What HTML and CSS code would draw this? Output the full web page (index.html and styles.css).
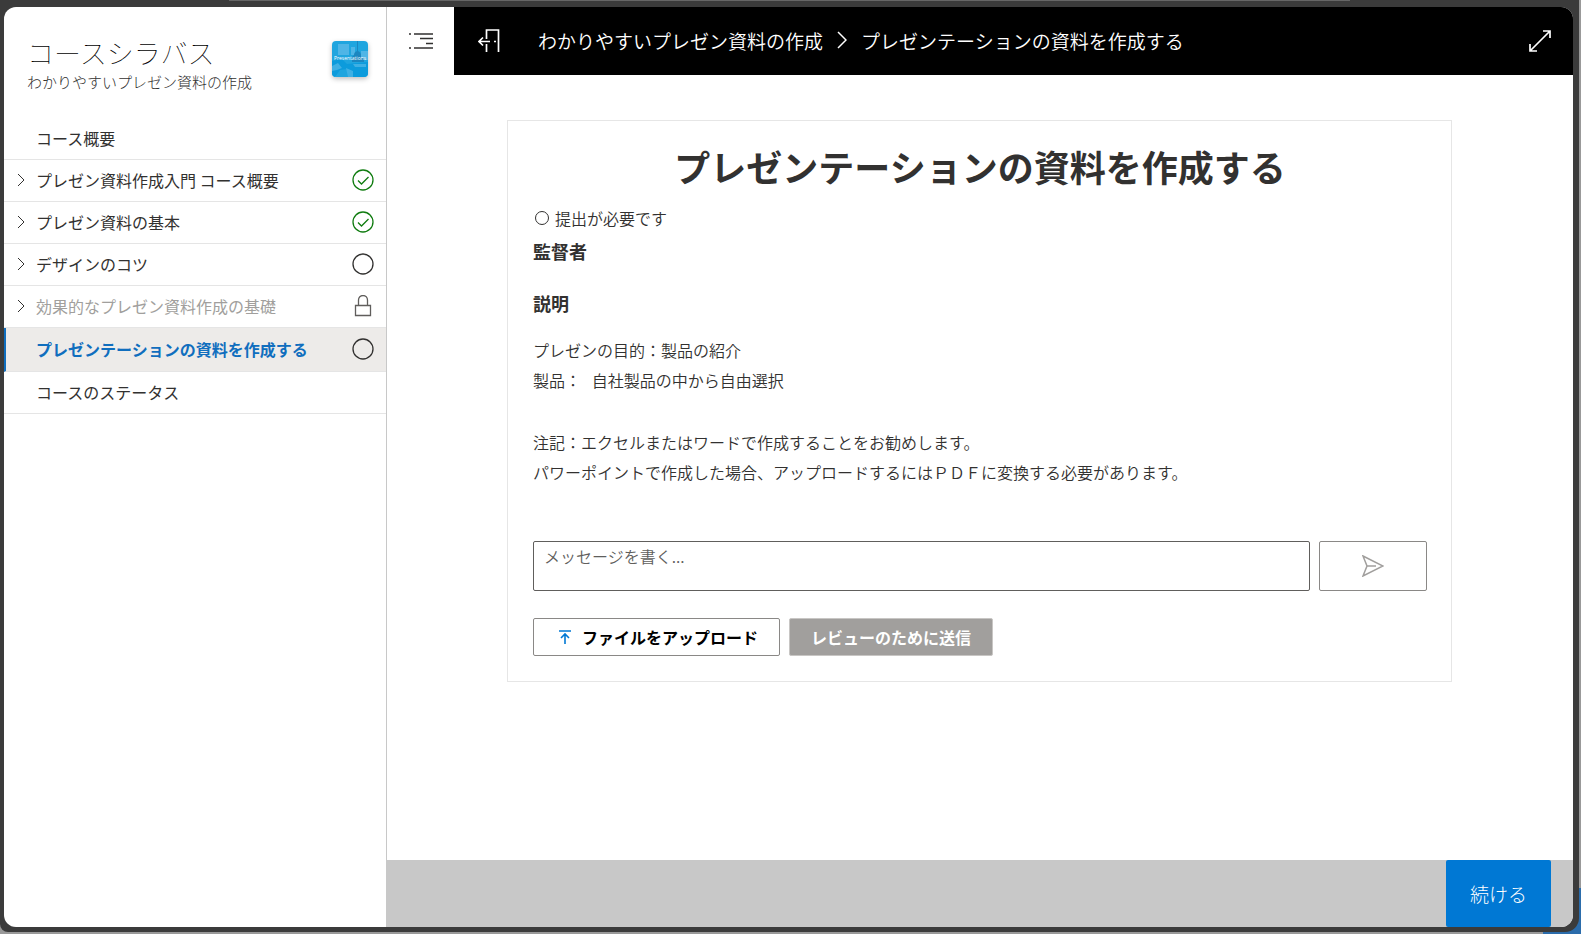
FILE: index.html
```
<!DOCTYPE html>
<html lang="ja">
<head>
    <meta charset="UTF-8">
    <meta name="viewport" content="width=device-width, initial-scale=1.0">
    <title>プレゼンテーションの資料を作成する</title>
    <link rel="stylesheet" href="styles.css">
</head>
<body>

<div class="frame">
<div class="player">
    <aside class="sidebar">
        <header class="course-header">
            <div>
                <h1>コースシラバス</h1>
                <p>わかりやすいプレゼン資料の作成</p>
            </div>
            <div class="course-logo">
                <svg viewBox="0 0 36 36" aria-hidden="true">
                    <rect width="36" height="36" fill="#1fa5df"/>
                    <path d="M6 3h11v11H6zM19 6h4v8h-4zM29 10h7v9h-7z" fill="#4fb5e6"/>
                    <path d="M22 14q0-3 3-4V0h1v10q3 1 3 4v3h3v4H20v-5z" fill="#1c86c0"/>
                    <path d="M0 20l10-2 5 5 21-2v15H17l-2-8-7 1-5 7H0z" fill="#0c9bdc"/>
                    <path d="M0 25l6-3 4 5-5 2-5 1zM14 27l7 3v6h-5zM21 23h13v3H23z" fill="#3fb0e4"/>
                </svg>
                <span>Presentations</span>
            </div>
        </header>
        <nav>
            <ul class="syllabus">
                <li><a href="#">コース概要</a></li>
                <li>
                    <a href="#">
                        <svg class="chevron" viewBox="0 0 8 14"><path d="M1 1l6 6-6 6"/></svg>
                        <span>プレゼン資料作成入門 コース概要</span>
                        <svg class="status done" viewBox="0 0 22 22"><circle cx="11" cy="11" r="10"/><path d="M6 11.500l3.500 3.500 7-7"/></svg>
                    </a>
                </li>
                <li>
                    <a href="#">
                        <svg class="chevron" viewBox="0 0 8 14"><path d="M1 1l6 6-6 6"/></svg>
                        <span>プレゼン資料の基本</span>
                        <svg class="status done" viewBox="0 0 22 22"><circle cx="11" cy="11" r="10"/><path d="M6 11.500l3.500 3.500 7-7"/></svg>
                    </a>
                </li>
                <li>
                    <a href="#">
                        <svg class="chevron" viewBox="0 0 8 14"><path d="M1 1l6 6-6 6"/></svg>
                        <span>デザインのコツ</span>
                        <svg class="status" viewBox="0 0 22 22"><circle cx="11" cy="11" r="10"/></svg>
                    </a>
                </li>
                <li>
                    <a href="#" class="locked">
                        <svg class="chevron" viewBox="0 0 8 14"><path d="M1 1l6 6-6 6"/></svg>
                        <span>効果的なプレゼン資料作成の基礎</span>
                        <svg class="status" viewBox="0 0 22 22"><path d="M3.500 10.500h15v10h-15zM6.500 10.500V5a4.500 4.500 0 0 1 9 0v5.500"/></svg>
                    </a>
                </li>
                <li>
                    <a href="#" class="current">
                        <span>プレゼンテーションの資料を作成する</span>
                        <svg class="status" viewBox="0 0 22 22"><circle cx="11" cy="11" r="10"/></svg>
                    </a>
                </li>
                <li><a href="#">コースのステータス</a></li>
            </ul>
        </nav>
    </aside>

    <div class="main">
        <header class="topbar">
            <button type="button" class="menu-btn" aria-label="目次">
                <svg viewBox="0 0 24 16"><path d="M0 1h2M5 1h19M11 5.500h13M17 10.500h7M0 15h2M5 15h19"/></svg>
            </button>
            <div class="titlebar">
                <button type="button" class="exit-btn" aria-label="終了">
                    <svg viewBox="0 0 22 24"><path d="M8.500 10V1h12v22M8.500 15v8M12 12.500H1M5 8.500l-4 4 4 4M16 12.500h2"/></svg>
                </button>
                <nav class="breadcrumb">
                    <a href="#">わかりやすいプレゼン資料の作成</a>
                    <svg viewBox="0 0 10 18"><path d="M1 1l8 8-8 8"/></svg>
                    <span>プレゼンテーションの資料を作成する</span>
                </nav>
                <button type="button" class="full-btn" aria-label="全画面">
                    <svg viewBox="0 0 22 22"><path d="M1 21L21 1M14 1h7v7M1 14v7h7"/></svg>
                </button>
            </div>
        </header>

        <main class="content">
            <section class="card">
                <h2>プレゼンテーションの資料を作成する</h2>
                <p class="required">
                    <svg viewBox="0 0 14 14"><circle cx="7" cy="7" r="6.500"/></svg>
                    提出が必要です
                </p>
                <h3>監督者</h3>
                <h3 class="desc-title">説明</h3>
                <div class="description">
                    <p>プレゼンの目的：製品の紹介<br>製品：&nbsp;&nbsp; 自社製品の中から自由選択</p>
                    <p>注記：エクセルまたはワードで作成することをお勧めします。<br>パワーポイントで作成した場合、アップロードするにはＰＤＦに変換する必要があります。</p>
                </div>
                <form>
                    <div class="message-row">
                        <textarea aria-label="メッセージ" placeholder="メッセージを書く..."></textarea>
                        <button type="button" class="send-btn" aria-label="送信">
                            <svg viewBox="0 0 22 22"><path d="M1 1l20 10L1 21l4-10zM5 11h9"/></svg>
                        </button>
                    </div>
                    <div class="actions">
                        <button type="button" class="upload-btn">
                            <svg viewBox="0 0 12 14"><path d="M0 1h12M6 14V4M2 8l4-4 4 4"/></svg>
                            ファイルをアップロード
                        </button>
                        <button type="button" class="review-btn" disabled>レビューのために送信</button>
                    </div>
                </form>
            </section>
        </main>

        <footer class="footer">
            <button type="button" class="continue-btn">続ける</button>
        </footer>
    </div>
</div>
</div>

</body>
</html>
```
FILE: styles.css
```
* {
    box-sizing: border-box;
}
body {
    margin: 0;
    height: 100vh;
    padding: 0 2px 2px 0;
    background: linear-gradient(#2b6cab, #2b6cab) right bottom / 38px 46px no-repeat #999;
    color: #323130;
    font-family: "Noto Sans CJK JP", sans-serif;
    font-size: 16px;
}
h1, h2, h3, p, ul {
    margin: 0;
    padding: 0;
}
a {
    color: inherit;
    text-decoration: none;
}
button {
    padding: 0;
    border: none;
    background: none;
    color: inherit;
    font: inherit;
    cursor: pointer;
}
svg {
    display: block;
    flex: none;
    fill: none;
    stroke: currentColor;
}

/* Window frame */
.frame {
    height: 100%;
    padding: 7px 6px 5px 4px;
    border-radius: 0 0 14px 8px;
    background: linear-gradient(#666, #666) center top / 71% 1px no-repeat #3b3b3b;
}
.player {
    display: flex;
    height: 100%;
    background-color: #fff;
    border-radius: 12px;
    overflow: hidden;
}

/* Sidebar */
.sidebar {
    flex: none;
    width: 383px;
    border-right: 1px solid #c8c8c8;
}
.course-header {
    display: flex;
    justify-content: space-between;
    padding: 27px 18px 0 23px;
    height: 111px;
}
.course-header h1 {
    font-size: 27px;
    font-weight: 100;
    line-height: 38px;
    color: #000;
}
.course-header p {
    font-size: 15px;
    font-weight: 300;
    line-height: 20px;
}
.course-logo {
    position: relative;
    width: 36px;
    height: 36px;
    margin-top: 7px;
    border-radius: 4px;
    overflow: hidden;
    box-shadow: 0 2px 5px rgba(0, 0, 0, 0.25);
}
.course-logo svg {
    stroke: none;
}
.course-logo span {
    position: absolute;
    top: 12px;
    left: 0;
    width: 100%;
    color: #fff;
    font: 5px/10px "Open Sans", sans-serif;
    text-align: center;
}
.syllabus {
    list-style: none;
}
.syllabus a {
    display: flex;
    align-items: center;
    height: 42px;
    padding: 0 12px 2px 32px;
    border-bottom: 1px solid #e5e5e5;
}
.syllabus span {
    flex: 1;
    white-space: nowrap;
}
.chevron {
    width: 8px;
    height: 14px;
    margin: 0 11px 0 -19px;
    color: #323130;
}
.status {
    width: 22px;
    height: 22px;
    stroke-width: 1.300;
}
.done {
    color: #107c10;
}
.syllabus .locked {
    color: #a19f9d;
}
.locked .status {
    color: #605e5c;
}
.syllabus .current {
    height: 44px;
    padding-left: 30px;
    border-left: 2px solid #106ebe;
    background-color: #edebe9;
    color: #106ebe;
    font-weight: bold;
}
.current .status {
    color: #323130;
}

/* Main area */
.main {
    display: flex;
    flex: 1;
    flex-direction: column;
    min-width: 0;
}
.topbar {
    display: flex;
    height: 68px;
}
.menu-btn {
    display: flex;
    align-items: center;
    justify-content: center;
    width: 67px;
}
.menu-btn svg {
    width: 24px;
    height: 16px;
    stroke-width: 1.600;
}
.titlebar {
    display: flex;
    flex: 1;
    align-items: center;
    padding: 0 22px 0 24px;
    background-color: #000;
    color: #fff;
}
.exit-btn svg {
    width: 22px;
    height: 24px;
    stroke-width: 1.700;
}
.breadcrumb {
    display: flex;
    flex: 1;
    align-items: center;
    gap: 14px;
    margin-left: 38px;
    padding-bottom: 2px;
    font-size: 19px;
    font-weight: 350;
}
.breadcrumb svg {
    width: 10px;
    height: 18px;
    stroke-width: 1.500;
}
.full-btn svg {
    width: 22px;
    height: 22px;
    stroke-width: 1.700;
}
.content {
    flex: 1;
    padding: 45px 121px 0 120px;
}
.card {
    padding: 24px 24px 25px 25px;
    border: 1px solid #e6e6e6;
}
.card h2 {
    font-size: 36px;
    line-height: 42px;
    text-align: center;
}
.required {
    display: flex;
    align-items: center;
    gap: 6px;
    padding-left: 2px;
    margin-top: 15px;
    font-weight: 350;
    line-height: 32px;
}
.required svg {
    width: 14px;
    height: 14px;
}
.card h3 {
    font-size: 18px;
    line-height: 34px;
}
.card .desc-title {
    margin-top: 18px;
}
.description {
    display: flex;
    flex-direction: column;
    gap: 32px;
    margin-top: 15px;
    font-weight: 350;
    line-height: 30px;
}
.message-row {
    display: flex;
    gap: 9px;
    margin-top: 54px;
}
.message-row textarea {
    flex: 1;
    height: 50px;
    padding: 2px 10px;
    border: 1px solid #605e5c;
    border-radius: 2px;
    font: inherit;
    font-weight: 350;
    resize: none;
}
.message-row textarea::placeholder {
    color: #605e5c;
}
.send-btn {
    display: flex;
    align-items: center;
    justify-content: center;
    width: 108px;
    border: 1px solid #8a8886;
    border-radius: 2px;
    color: #a19f9d;
}
.send-btn svg {
    width: 22px;
    height: 22px;
    stroke-width: 1.500;
}
.actions {
    display: flex;
    gap: 9px;
    margin-top: 27px;
}
.actions button {
    display: flex;
    align-items: center;
    height: 38px;
    padding: 0 21px;
    border: 1px solid #8a8886;
    border-radius: 2px;
    font-weight: bold;
}
.actions .upload-btn {
    gap: 11px;
    padding-left: 25px;
    color: #000;
}
.upload-btn svg {
    width: 12px;
    height: 14px;
    color: #0078d4;
    stroke-width: 1.600;
}
.actions .review-btn {
    border-color: #c8c6c4;
    background-color: #a19f9d;
    color: #fff;
}
.footer {
    display: flex;
    justify-content: flex-end;
    height: 67px;
    padding-right: 22px;
    background-color: #c8c8c8;
}
.continue-btn {
    width: 105px;
    border-radius: 2px;
    background-color: #0078d4;
    color: #fff;
    font-size: 19px;
    font-weight: 300;
}
```
